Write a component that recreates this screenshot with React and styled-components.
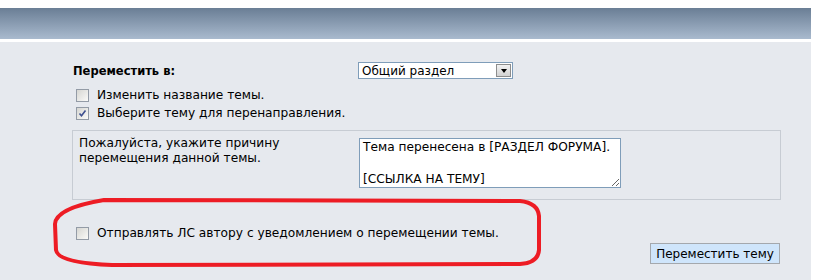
import React from 'react';
import styled, { createGlobalStyle } from 'styled-components';

const GlobalStyle = createGlobalStyle`
  html, body {
    margin: 0;
    padding: 0;
    background: #fff;
  }
  body {
    font-family: "DejaVu Sans", Verdana, sans-serif;
    font-size: 12px;
    color: #000;
  }
`

const Page = styled.div`
  position: relative;
  width: 813px;
  height: 280px;
  padding-top: 8px;
  box-sizing: border-box;
  overflow: hidden;
`

const HeaderBar = styled.div`
  height: 31px;
  margin-right: 2px;
  background: linear-gradient(to bottom, #6a7e95, #a9bace);
`

const Panel = styled.div`
  margin-top: 3px;
  margin-right: 2px;
  height: 238px;
  background: #e6e9ee;
  padding: 20px 30px 0 72px;
  box-sizing: border-box;
`

const FieldRow = styled.div`
  display: grid;
  grid-template-columns: 286px 1fr;
  align-items: center;
`

const FieldLabel = styled.div`
  font-weight: bold;
  font-size: 11.5px;
  padding-left: 1px;
`

const Select = styled.div`
  width: 155px;
  height: 17px;
  box-sizing: border-box;
  border: 1px solid #7f9db9;
  background: #fff;
  display: flex;
  align-items: center;
  justify-content: space-between;
  padding-left: 3px;
`

const SelectArrow = styled.span`
  width: 15px;
  height: 13px;
  margin-right: 1px;
  box-sizing: border-box;
  border: 1px solid #8d8d8d;
  background: linear-gradient(to bottom, #f2f2f2, #d2d2d2);
  display: flex;
  align-items: center;
  justify-content: center;

  &::after {
    content: '';
    border-left: 3px solid transparent;
    border-right: 3px solid transparent;
    border-top: 4px solid #000;
  }
`

const CheckList = styled.div`
  margin-top: 7px;
`

const CheckRow = styled.label`
  display: flex;
  align-items: center;
  height: 18px;
  font-size: 12.2px;
  margin-top: ${(props) => props.$top || 0}px;
`

const Box = styled.span`
  width: 13px;
  height: 13px;
  box-sizing: border-box;
  margin-left: 4px;
  margin-right: 8px;
  border: 1px solid #939ba6;
  background: linear-gradient(135deg, #d6d6d2, #fafaf8);
  display: flex;
  align-items: center;
  justify-content: center;
`

const ReasonBox = styled.div`
  margin-top: 8px;
  height: 70px;
  box-sizing: border-box;
  border: 1px solid #c7ccd3;
  display: grid;
  grid-template-columns: 286px 1fr;
`

const ReasonText = styled.div`
  padding: 5px 0 0 6px;
  line-height: 15px;
  font-size: 12.2px;
`

const Textarea = styled.textarea`
  margin-top: 7px;
  width: 262px;
  height: 50px;
  box-sizing: border-box;
  border: 1px solid #7f9db9;
  padding: 0 3px;
  font-family: "DejaVu Sans", Verdana, sans-serif;
  font-size: 12.2px;
  line-height: 16px;
  color: #000;
  resize: both;
  overflow: hidden;
`

const ButtonRow = styled.div`
  display: flex;
  justify-content: flex-end;
  margin-top: 1px;
`

const Button = styled.button`
  height: 21px;
  width: 130px;
  margin-right: 1px;
  border: 1px solid #a4a8ad;
  background: #cfe5fb;
  font-family: "DejaVu Sans", Verdana, sans-serif;
  font-size: 12px;
  color: #000;
  padding: 0;
`

const Annotation = styled.svg`
  position: absolute;
  left: 0;
  top: 0;
  pointer-events: none;
`

const Checkbox = ({ checked }) => (
  <Box>
    {checked && (
      <svg width="9" height="9" viewBox="0 0 9 9">
        <path d="M1.5 4.5 L3.5 6.8 L7.5 1.5" fill="none" stroke="#3d4f8f" strokeWidth="1.6" />
      </svg>
    )}
  </Box>
)

export default function App() {
  return (
    <Page>
      <GlobalStyle />
      <HeaderBar />
      <Panel>
        <FieldRow>
          <FieldLabel>Переместить в:</FieldLabel>
          <Select>
            Общий раздел
            <SelectArrow />
          </Select>
        </FieldRow>
        <CheckList>
          <CheckRow>
            <Checkbox />
            Изменить название темы.
          </CheckRow>
          <CheckRow>
            <Checkbox checked />
            Выберите тему для перенаправления.
          </CheckRow>
        </CheckList>
        <ReasonBox>
          <ReasonText>
            Пожалуйста, укажите причину<br />
            перемещения данной темы.
          </ReasonText>
          <Textarea defaultValue={'Тема перенесена в [РАЗДЕЛ ФОРУМА].\n\n[ССЫЛКА НА ТЕМУ]'} />
        </ReasonBox>
        <CheckRow $top={24}>
          <Checkbox />
          Отправлять ЛС автору с уведомлением о перемещении темы.
        </CheckRow>
        <ButtonRow>
          <Button>Переместить тему</Button>
        </ButtonRow>
      </Panel>
      <Annotation width="813" height="280" viewBox="0 0 813 280">
        <path
          d="M104 200 L520 201 Q538 203 539 216 L539 250 Q538 263 520 264 L112 265 Q58 263 56 250 L55 224 Q56 208 104 200 Z"
          fill="none"
          stroke="#ed1c24"
          strokeWidth="4"
        />
      </Annotation>
    </Page>
  );
}
